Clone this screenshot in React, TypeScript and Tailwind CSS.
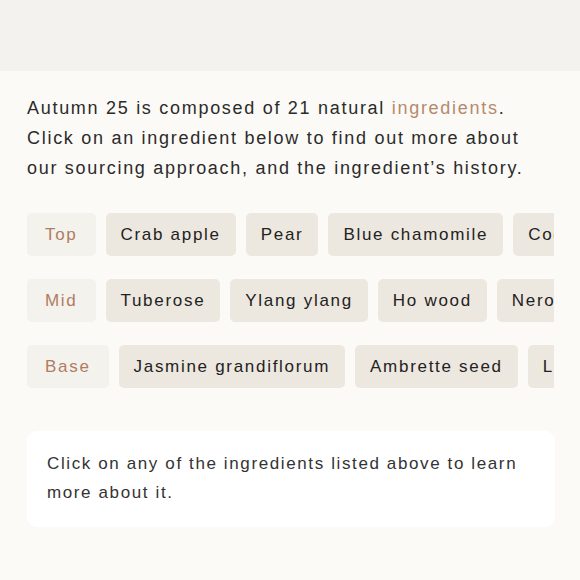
import React from 'react'

const notes = [
  { label: 'Top', items: ['Crab apple', 'Pear', 'Blue chamomile', 'Cognac oil'] },
  { label: 'Mid', items: ['Tuberose', 'Ylang ylang', 'Ho wood', 'Neroli'] },
  { label: 'Base', items: ['Jasmine grandiflorum', 'Ambrette seed', 'Labdanum'] },
]

export default function App() {
  return (
    <div
      className="w-[580px] h-[580px] overflow-hidden bg-[#fbfaf6] text-[#2b2b2b]"
      style={{ fontFamily: '"Liberation Sans", Arial, sans-serif' }}
    >
      {/* top band */}
      <div className="h-[71px] bg-[#f3f2ee]" />

      <main className="px-[27px] pt-[22px]">
        <p className="text-[18px] leading-[30px] tracking-[0.095em] whitespace-nowrap">
          Autumn 25 is composed of 21 natural <span className="text-[#b48a6e]">ingredients</span>.
          <br />
          Click on an ingredient below to find out more about
          <br />
          our sourcing approach, and the ingredient’s history.
        </p>

        {/* notes */}
        <div className="mt-[30px] w-[527px] overflow-hidden flex flex-col gap-[23px]">
          {notes.map((row) => (
            <div key={row.label} className="flex gap-[10px] whitespace-nowrap">
              <div className="h-[43px] px-[18px] flex items-center rounded-[5px] bg-[#f4f2ec] text-[#b07c62] text-[17px] tracking-[0.1em]">
                {row.label}
              </div>
              {row.items.map((item) => (
                <button
                  key={item}
                  className="h-[43px] px-[15px] flex items-center shrink-0 rounded-[5px] bg-[#ede8df] text-[17px] tracking-[0.1em] text-[#222]"
                >
                  {item}
                </button>
              ))}
            </div>
          ))}
        </div>

        {/* detail card */}
        <div className="mt-[43px] w-[528px] rounded-[10px] bg-white px-[20px] pt-[18px] pb-[20px]">
          <p className="text-[17px] leading-[29px] tracking-[0.095em] text-[#333]">
            Click on any of the ingredients listed above to learn more about it.
          </p>
        </div>
      </main>
    </div>
  )
}
